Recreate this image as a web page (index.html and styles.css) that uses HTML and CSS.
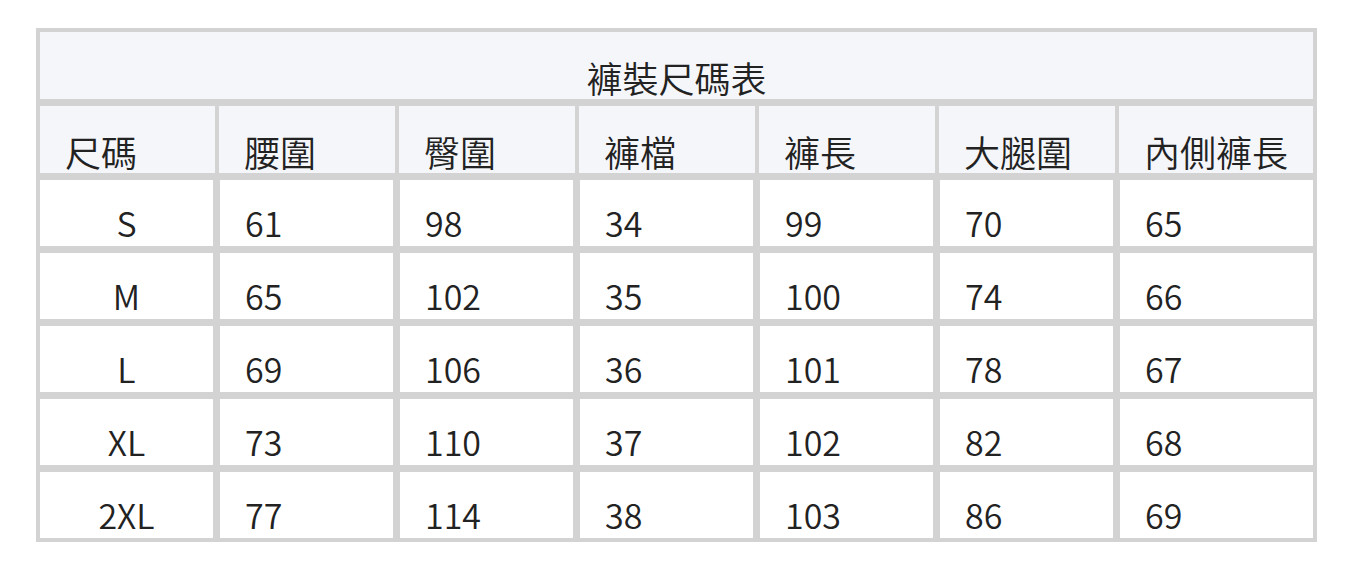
FILE: index.html
```html
<!DOCTYPE html>
<html lang="zh-Hant">
<head>
<meta charset="utf-8">
<title>褲裝尺碼表</title>
<link rel="stylesheet" href="styles.css">
</head>
<body>
<div class="size-table">
  <div class="title">褲裝尺碼表</div>
  <div class="row head">
    <div class="cell">尺碼</div>
    <div class="cell">腰圍</div>
    <div class="cell">臀圍</div>
    <div class="cell">褲檔</div>
    <div class="cell">褲長</div>
    <div class="cell">大腿圍</div>
    <div class="cell">內側褲長</div>
  </div>
  <div class="row data">
    <div class="cell size">S</div><div class="cell">61</div><div class="cell">98</div><div class="cell">34</div><div class="cell">99</div><div class="cell">70</div><div class="cell">65</div>
  </div>
  <div class="row data">
    <div class="cell size">M</div><div class="cell">65</div><div class="cell">102</div><div class="cell">35</div><div class="cell">100</div><div class="cell">74</div><div class="cell">66</div>
  </div>
  <div class="row data">
    <div class="cell size">L</div><div class="cell">69</div><div class="cell">106</div><div class="cell">36</div><div class="cell">101</div><div class="cell">78</div><div class="cell">67</div>
  </div>
  <div class="row data">
    <div class="cell size">XL</div><div class="cell">73</div><div class="cell">110</div><div class="cell">37</div><div class="cell">102</div><div class="cell">82</div><div class="cell">68</div>
  </div>
  <div class="row data">
    <div class="cell size">2XL</div><div class="cell">77</div><div class="cell">114</div><div class="cell">38</div><div class="cell">103</div><div class="cell">86</div><div class="cell">69</div>
  </div>
</div>
</body>
</html>
```

FILE: styles.css
```css
html, body {
  margin: 0;
  padding: 0;
  background: #ffffff;
}

body {
  padding: 28px 0 0 36px;
  font-family: "Noto Sans CJK TC", "Noto Sans", sans-serif;
  font-weight: 350;
  color: #222222;
}

.size-table {
  width: 1273px;
  background: #d3d3d3;
  padding: 4px;
  display: flex;
  flex-direction: column;
  gap: 7px;
}

.title {
  height: 67px;
  box-sizing: border-box;
  background: #f5f6fa;
  font-size: 36px;
  line-height: 36px;
  text-align: center;
  display: flex;
  align-items: flex-end;
  justify-content: center;
  padding-bottom: 4px;
}

.row {
  display: grid;
}

.row.head {
  grid-template-columns: 175px 176px 176px 176px 176px 176px 194px;
  column-gap: 4px;
  height: 67px;
}

.row.data {
  grid-template-columns: 173px 173px 173px 173px 173px 173px 193px;
  column-gap: 7px;
  height: 66px;
}

.cell {
  box-sizing: border-box;
  display: flex;
  align-items: flex-end;
  padding-left: 25px;
}

.head .cell {
  background: #f5f6fa;
  font-size: 36px;
  line-height: 36px;
  padding-bottom: 4px;
}

.data .cell {
  background: #ffffff;
  font-size: 34px;
  line-height: 34px;
  padding-bottom: 6px;
}

.data .cell.size {
  justify-content: center;
  padding-left: 0;
}
```
